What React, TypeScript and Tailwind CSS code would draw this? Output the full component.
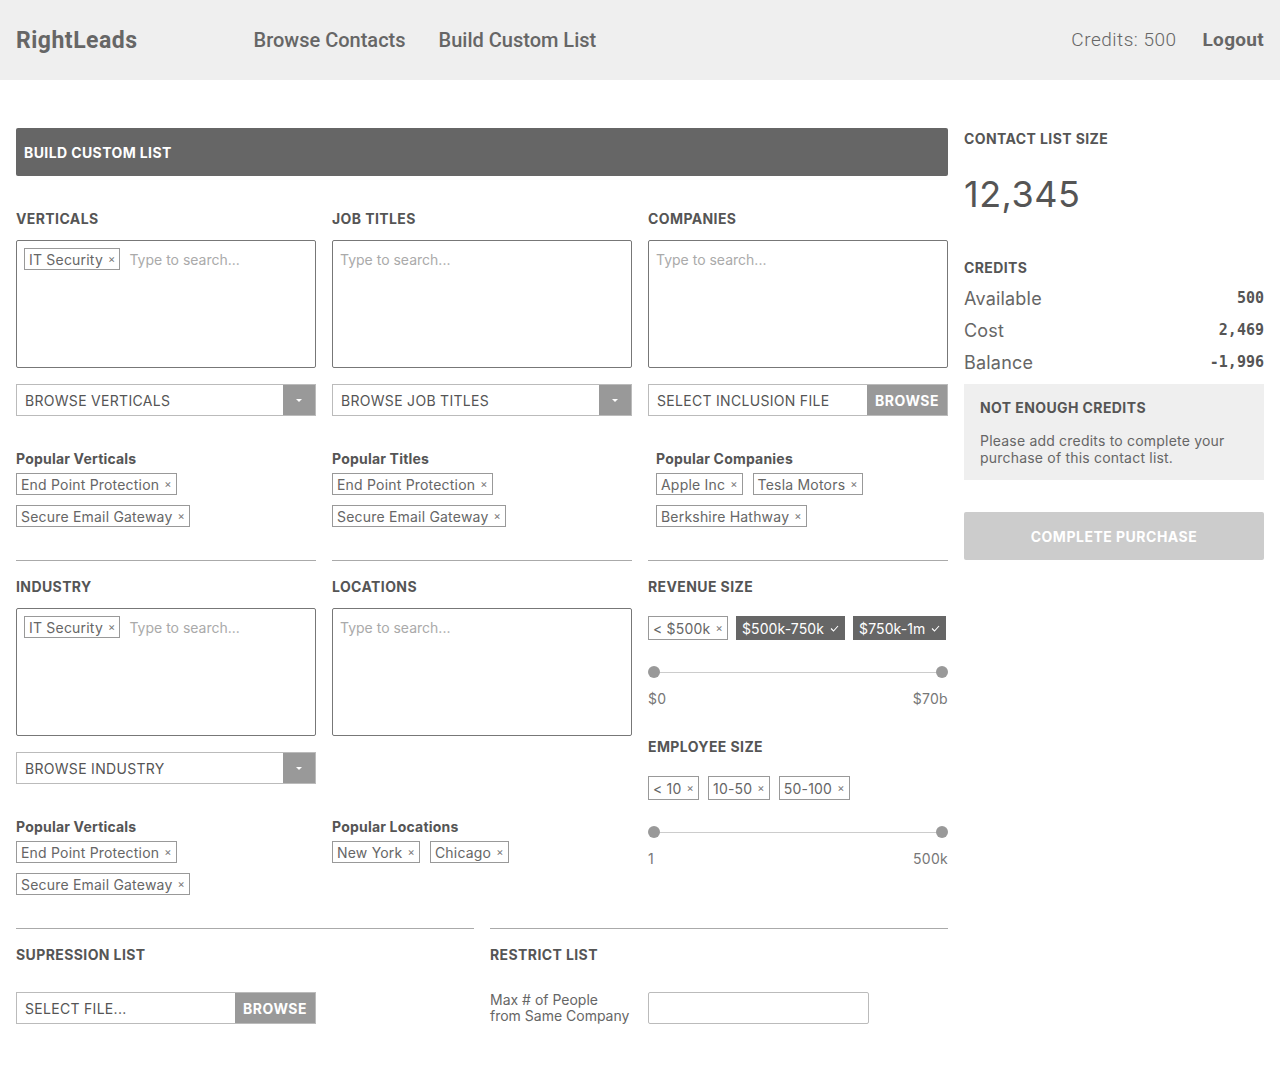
import React from "react";

const body = { fontFamily: "Inter, 'Open Sans', sans-serif" };

function Chip({ label, dark, tall }: { label: string; dark?: boolean; tall?: boolean }) {
  if (dark) {
    return (
      <span className="inline-flex h-6 shrink-0 items-center gap-1 whitespace-nowrap bg-[#666] px-[6px] text-[14px] tracking-[0.1px] text-white">
        {label}
        <svg width="9" height="7" viewBox="0 0 9 7" className="ml-0.5">
          <path d="M1 3.5 L3.5 6 L8 1" stroke="#fff" strokeWidth="1.1" fill="none" />
        </svg>
      </span>
    );
  }
  return (
    <span
      className={
        "inline-flex shrink-0 items-center whitespace-nowrap border border-[#999] px-[4px] text-[14px] tracking-[0.2px] text-[#666] " +
        (tall ? "h-6" : "h-[22px]")
      }
    >
      {label}
      <span className="ml-[5px] text-[11px] text-[#777]">×</span>
    </span>
  );
}

function Label({ children, className = "" }: { children: React.ReactNode; className?: string }) {
  return (
    <div className={"h-5 text-[14px] font-bold uppercase leading-5 tracking-[0.4px] text-[#555] " + className}>
      {children}
    </div>
  );
}

function SearchBox({ chip }: { chip?: string }) {
  return (
    <div className="mt-[11px] flex h-[128px] items-start gap-[9px] rounded-[2px] border border-[#777] p-[7px]">
      {chip && <Chip label={chip} />}
      <span className="flex h-[22px] items-center text-[14px] text-[#aaa]">Type to search...</span>
    </div>
  );
}

function Dropdown({ label }: { label: string }) {
  return (
    <div className="mt-4 flex h-8 border border-[#bbb]">
      <div className="flex flex-1 items-center px-2 text-[14px] uppercase tracking-[0.3px] text-[#555]">{label}</div>
      <div className="flex w-8 items-center justify-center bg-[#999]">
        <svg width="8" height="5" viewBox="0 0 8 5">
          <path d="M1 1 L4 4 L7 1 Z" fill="#fff" />
        </svg>
      </div>
    </div>
  );
}

function FileInput({ label, className = "" }: { label: string; className?: string }) {
  return (
    <div className={"flex h-8 border border-[#bbb] " + className}>
      <div className="flex flex-1 items-center px-2 text-[14px] uppercase tracking-[0.3px] text-[#555]">{label}</div>
      <div className="flex w-[80px] items-center justify-center bg-[#999] text-[14px] font-bold tracking-[0.5px] text-white">
        BROWSE
      </div>
    </div>
  );
}

function Popular({ title, rows, className = "" }: { title: string; rows: string[][]; className?: string }) {
  return (
    <div className={"mt-[33px] " + className}>
      <div className="h-5 text-[14px] font-bold leading-5 tracking-[0.2px] text-[#555]">{title}</div>
      <div className="mt-1 flex flex-col gap-[10px]">
        {rows.map((r, i) => (
          <div key={i} className="flex gap-[10px]">
            {r.map((c) => (
              <Chip key={c} label={c} />
            ))}
          </div>
        ))}
      </div>
    </div>
  );
}

function Slider({ min, max }: { min: string; max: string }) {
  return (
    <div>
      <div className="relative mt-[26px] flex h-3 items-center">
        <div className="mx-1.5 h-px flex-1 bg-[#ccc]" />
        <span className="absolute left-0 h-3 w-3 rounded-full bg-[#999]" />
        <span className="absolute right-0 h-3 w-3 rounded-full bg-[#999]" />
      </div>
      <div className="mt-[11px] flex h-5 justify-between text-[14px] leading-5 tracking-[0.3px] text-[#777]">
        <span>{min}</span>
        <span>{max}</span>
      </div>
    </div>
  );
}

function Divider() {
  return <div className="h-px bg-[#aaa]" />;
}

export default function App() {
  return (
    <div className="min-h-[1072px] bg-white" style={body}>
      <header className="flex h-20 items-center bg-[#efefef] px-4" style={{ fontFamily: "Roboto, sans-serif" }}>
        <div className="pt-0.5 text-[23px] font-bold tracking-[0.5px] text-[#666]">RightLeads</div>
        <nav className="ml-[116px] flex gap-[33px] text-[20px] font-medium text-[#666]">
          <span>Browse Contacts</span>
          <span>Build Custom List</span>
        </nav>
        <div className="ml-auto flex items-center gap-[26px] text-[19px] text-[#666]">
          <span className="font-light tracking-[0.5px]">Credits: 500</span>
          <span className="font-bold tracking-[0.3px]">Logout</span>
        </div>
      </header>

      <main className="flex gap-4 px-4 pt-12">
        <section className="w-[932px]">
          <div className="flex h-12 items-center rounded-[2px] bg-[#666] px-2 text-[14px] font-bold tracking-[0.4px] text-white">
            BUILD CUSTOM LIST
          </div>

          <div className="grid grid-cols-3 gap-x-4">
            <div className="flex flex-col">
              <Label className="mt-[33px]">Verticals</Label>
              <SearchBox chip="IT Security" />
              <Dropdown label="Browse Verticals" />
              <Popular title="Popular Verticals" rows={[["End Point Protection"], ["Secure Email Gateway"]]} />
              <div className="mt-[33px]"><Divider /></div>
            </div>
            <div className="flex flex-col">
              <Label className="mt-[33px]">Job Titles</Label>
              <SearchBox />
              <Dropdown label="Browse Job Titles" />
              <Popular title="Popular Titles" rows={[["End Point Protection"], ["Secure Email Gateway"]]} />
              <div className="mt-[33px]"><Divider /></div>
            </div>
            <div className="flex flex-col">
              <Label className="mt-[33px]">Companies</Label>
              <SearchBox />
              <FileInput label="Select Inclusion File" className="mt-4" />
              <Popular title="Popular Companies" className="pl-2" rows={[["Apple Inc", "Tesla Motors"], ["Berkshire Hathway"]]} />
              <div className="mt-[33px]"><Divider /></div>
            </div>

            <div className="flex flex-col">
              <Label className="mt-4">Industry</Label>
              <SearchBox chip="IT Security" />
              <Dropdown label="Browse Industry" />
              <Popular title="Popular Verticals" rows={[["End Point Protection"], ["Secure Email Gateway"]]} />
            </div>
            <div className="flex flex-col">
              <Label className="mt-4">Locations</Label>
              <SearchBox />
              <Popular title="Popular Locations" className="mt-[81px]" rows={[["New York", "Chicago"]]} />
            </div>
            <div className="flex flex-col">
              <Label className="mt-4">Revenue Size</Label>
              <div className="mt-[19px] flex gap-[8px]">
                <Chip label="< $500k" tall />
                <Chip label="$500k-750k" dark />
                <Chip label="$750k-1m" dark />
              </div>
              <Slider min="$0" max="$70b" />
              <Label className="mt-[28px]">Employee Size</Label>
              <div className="mt-[19px] flex gap-[9px]">
                <Chip label="< 10" tall />
                <Chip label="10-50" tall />
                <Chip label="50-100" tall />
              </div>
              <Slider min="1" max="500k" />
            </div>
          </div>

          <div className="mt-[33px] grid grid-cols-2 gap-x-4">
            <div>
              <Divider />
              <Label className="mt-4">Supression List</Label>
              <FileInput label="Select File..." className="mt-[27px] w-[300px]" />
            </div>
            <div>
              <Divider />
              <Label className="mt-4">Restrict List</Label>
              <div className="mt-[27px] flex items-center gap-4">
                <div className="w-[142px] whitespace-nowrap text-[14px] leading-4 text-[#666]">
                  Max # of People
                  <br />
                  from Same Company
                </div>
                <div className="h-8 w-[221px] rounded-[2px] border border-[#bbb]" />
              </div>
            </div>
          </div>
        </section>

        <aside className="w-[300px]">
          <Label className="mt-px">Contact List Size</Label>
          <div className="mt-[25px] h-10 text-[36px] leading-10 tracking-[0.5px] text-[#555]">12,345</div>
          <Label className="mt-[44px]">Credits</Label>
          <div className="mt-[4px]">
            {[
              ["Available", "500"],
              ["Cost", "2,469"],
              ["Balance", "-1,996"],
            ].map(([k, v]) => (
              <div key={k} className="flex h-8 items-center justify-between">
                <span className="text-[18px] tracking-[0.2px] text-[#666]">{k}</span>
                <span className="text-[15px] font-bold text-[#555]" style={{ fontFamily: "'DejaVu Sans Mono', monospace" }}>
                  {v}
                </span>
              </div>
            ))}
          </div>
          <div className="mt-[6px] h-24 bg-[#efefef] px-4 pt-[14px]">
            <div className="h-5 text-[14px] font-bold leading-5 tracking-[0.4px] text-[#555]">NOT ENOUGH CREDITS</div>
            <div className="mt-[14px] text-[14px] leading-[17px] tracking-[0.2px] text-[#666]">
              Please add credits to complete your purchase of this contact list.
            </div>
          </div>
          <button className="mt-8 flex h-12 w-full items-center justify-center rounded-[2px] bg-[#ccc] text-[14px] font-bold tracking-[0.5px] text-white">
            COMPLETE PURCHASE
          </button>
        </aside>
      </main>
    </div>
  );
}
